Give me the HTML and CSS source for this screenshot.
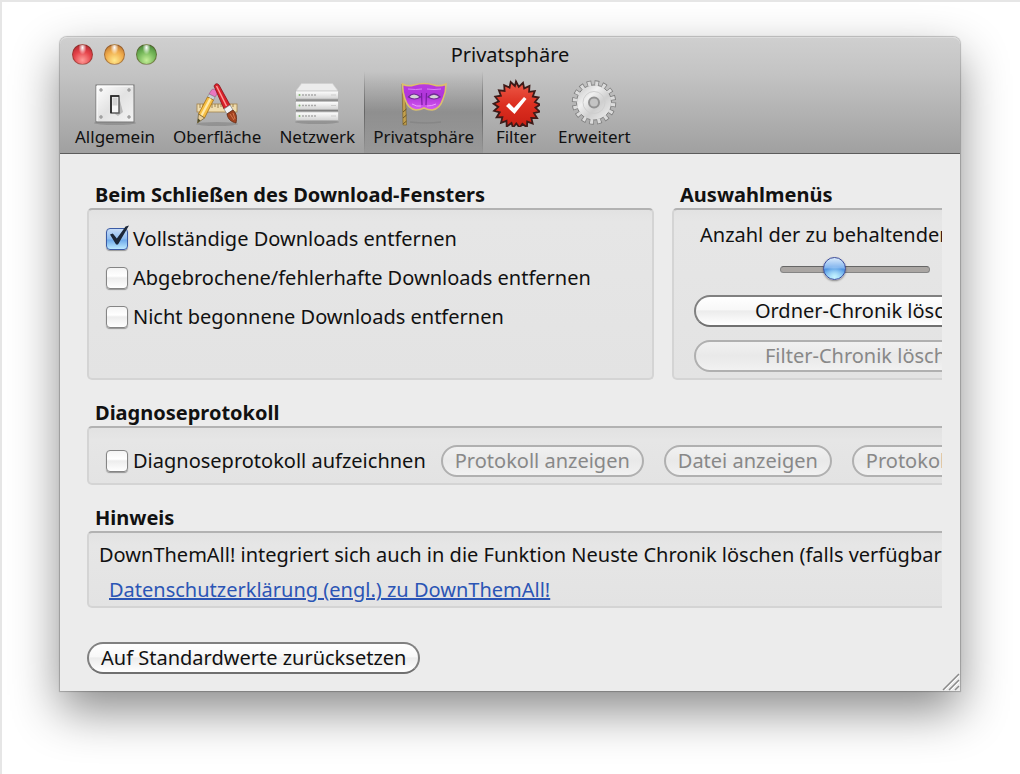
FILE: index.html
```html
<!DOCTYPE html>
<html lang="de">
<head>
  <meta charset="UTF-8" />
  <title>Privatsphäre</title>
  <link rel="stylesheet" href="styles.css">
</head>
<body>

<div class="window">
  <header class="window-head">
    <div class="titlebar">
      <div class="lights">
        <button class="light red" aria-label="Schließen"></button>
        <button class="light yellow" aria-label="Minimieren"></button>
        <button class="light green" aria-label="Zoomen"></button>
      </div>
      <h1>Privatsphäre</h1>
    </div>

    <nav class="toolbar">
      <button class="tool">
        <svg viewBox="0 0 48 48">
          <defs>
            <linearGradient id="plate" x1="0" y1="0" x2="1" y2="1">
              <stop offset="0" stop-color="#fff"/><stop offset=".5" stop-color="#e2e2e2"/><stop offset="1" stop-color="#f4f4f4"/>
            </linearGradient>
          </defs>
          <ellipse cx="24" cy="44" rx="21" ry="2" fill="#000" opacity=".15"/>
          <rect x="5" y="6" width="38" height="37" fill="url(#plate)" stroke="#777"/>
          <path d="M6 42V7h36" fill="none" stroke="#fff"/>
          <g fill="#aaa" stroke="#888" stroke-width=".5">
            <circle cx="10" cy="11" r="1.400"/><circle cx="38" cy="11" r="1.400"/>
            <circle cx="10" cy="38" r="1.400"/><circle cx="38" cy="38" r="1.400"/>
          </g>
          <path d="M28 18l4 15-5 4-3-2z" fill="#000" opacity=".2"/>
          <rect x="20" y="17" width="8" height="17" fill="#f6f6f6" stroke="#555" stroke-width="1.400"/>
          <path d="M20 34V17h8" fill="none" stroke="#222" stroke-width="1.600"/>
          <rect x="21.500" y="18.500" width="5" height="8" fill="#d4d4d4"/>
        </svg>
        <span>Allgemein</span>
      </button>

      <button class="tool">
        <svg viewBox="0 0 48 48">
          <ellipse cx="24" cy="45" rx="21" ry="2" fill="#000" opacity=".15"/>
          <rect x="4" y="25" width="40" height="8" fill="#efdcae" stroke="#a5844c" stroke-width=".8"/>
          <path d="M7 25v4M10 25v3M13 25v4M16 25v3M19 25v4M22 25v3M25 25v4M28 25v3M31 25v4M34 25v3M37 25v4M40 25v3" stroke="#8c6c3b" stroke-width=".8"/>
          <path d="M18 12q1-3 5-1 3 2 1 4l-2 3-6-3z" fill="#e878c0" stroke="#a74d85" stroke-width=".6"/>
          <path d="M16 15l6 3-1.500 3-6-3z" fill="#c9d1da" stroke="#777" stroke-width=".5"/>
          <path d="M14.500 18l6 3-9 18-6-4z" fill="#f6bf45" stroke="#a56f15" stroke-width=".8"/>
          <path d="M16.500 19l2 1-9 17-2-1z" fill="#ffe9a8"/>
          <path d="M5.500 35l6 4-7 5z" fill="#e9cf9d" stroke="#6d5b31" stroke-width=".7"/>
          <path d="M5 39.500l2.500 2-3 2.500z" fill="#4c4a2a"/>
          <path d="M21 7q2-4 5-1l11 20-6 4z" fill="#d9202a" stroke="#85141b" stroke-width=".8"/>
          <path d="M23.500 7l10 20" stroke="#ff9796" stroke-width="1.500" fill="none"/>
          <path d="M31 30l6-4 3 5-6 4z" fill="#f1f3f5" stroke="#7e8288" stroke-width=".7"/>
          <path d="M34 35l6-4c4 4 4 8 3 13-4-1-8-3-9-9z" fill="#a3431f" stroke="#622812" stroke-width=".8"/>
          <path d="M37 35l4 6M40 34l2 6" stroke="#e08559" stroke-width=".8"/>
        </svg>
        <span>Oberfläche</span>
      </button>

      <button class="tool">
        <svg viewBox="0 0 48 48">
          <defs>
            <linearGradient id="rack" x1="0" y1="0" x2="0" y2="1">
              <stop offset="0" stop-color="#fff"/><stop offset="1" stop-color="#d2d2d2"/>
            </linearGradient>
          </defs>
          <ellipse cx="24" cy="43" rx="22" ry="2" fill="#000" opacity=".15"/>
          <path d="M8.500 4.500h31l6 8h-43z" fill="#ececec" stroke="#d0d0d0" stroke-width=".7"/>
          <g fill="url(#rack)" stroke="#aaa" stroke-width=".6">
            <rect x="2.500" y="12" width="43" height="8"/>
            <rect x="2.500" y="22.500" width="43" height="8"/>
            <rect x="2.500" y="33" width="43" height="8.500"/>
          </g>
          <path d="M3 21.200h42M3 31.700h42" stroke="#808080" stroke-width="1.200"/>
          <g fill="#80b86c"><circle cx="6.500" cy="16" r="1"/><circle cx="6.500" cy="26.500" r="1"/><circle cx="6.500" cy="37" r="1"/></g>
          <path d="M9 16h15M9 26.500h15M9 37h15" stroke="#aaa" stroke-width="1.600" stroke-dasharray="2 1"/>
          <path d="M38 16h5M38 26.500h5M38 37h5" stroke="#ccc"/>
        </svg>
        <span>Netzwerk</span>
      </button>

      <button class="tool selected">
        <svg viewBox="0 0 48 48">
          <defs>
            <linearGradient id="mask" x1="0" y1="0" x2="0" y2="1">
              <stop offset="0" stop-color="#b93be0"/><stop offset=".5" stop-color="#b035da"/><stop offset="1" stop-color="#d75cf2"/>
            </linearGradient>
          </defs>
          <path d="M10 43q16 2 31 0" stroke="#666" stroke-width="1.500" opacity=".25" fill="none"/>
          <path d="M2 5l3 1 1.500 40H3z" fill="#c4a04c" stroke="#7b6530" stroke-width=".7"/>
          <path d="M3 33l3.500-3M3 39l3.500-3M3 45l3.500-3" stroke="#6c5625"/>
          <path d="M2.500 5Q8 8 14 6q10-3 20 0 6 2 12-1 0 8-3 15-3 10-11 11-4 0-8-2-4 2-8 2-8-1-11-11Q2.500 13 2.500 5z" fill="url(#mask)" stroke="#dcc06c" stroke-width="1.600"/>
          <path d="M8 10q8 1 14 0M27 10q7 1 14 0" stroke="#d785f0" fill="none"/>
          <path d="M21.500 14l.5 12M26.500 14l-.5 12" stroke="#7a1ba3" stroke-width="1.200" fill="none"/>
          <path d="M8.500 18q5-6 12 0-6 4-12 0zM28 18q6-6 12 0-6 4-12 0z" fill="#d4d2d6" stroke="#6f2a92" stroke-width="1.200"/>
          <path d="M12 25q5 3 9 2M27 27q5 0 9-2" stroke="#eda0fc" fill="none"/>
        </svg>
        <span>Privatsphäre</span>
      </button>

      <button class="tool">
        <svg viewBox="0 0 48 48">
          <defs>
            <linearGradient id="seal" x1="0" y1="0" x2="0" y2="1">
              <stop offset="0" stop-color="#ee5b49"/><stop offset=".5" stop-color="#dc2f20"/><stop offset="1" stop-color="#c91e14"/>
            </linearGradient>
          </defs>
          <path fill="url(#seal)" stroke="#3d1a18" stroke-width="1.800" d="M24 2.500l2.800 5.300 4.200-4 1.200 5.600 5.300-2.400-.4 5.800 5.700-.7-2 5.400 5.700 1-3.600 4.600 5.200 2.400-4.700 3.200 4.200 3.900-5.600 1.500 3.100 5-5.800-.1 1.400 5.600-5.500-2-.2 5.800-4.600-3.600-2.800 4-3.300-4.400-3.300 4.400-1.500-4.800-4.800 3.600-.2-5.800-5.500 2 1.400-5.600-5.800.1 3.100-5-5.600-1.500 4.200-3.900-4.700-3.200 5.200-2.400-3.600-4.600 5.700-1-2-5.400 5.700.7-.4-5.800 5.300 2.400 1.200-5.600 4.200 4z"/>
          <path d="M14 27l3-3 5 5 10-11 2.500 2-12 15z" fill="#fff"/>
        </svg>
        <span>Filter</span>
      </button>

      <button class="tool">
        <svg viewBox="0 0 48 48">
          <defs>
            <linearGradient id="gear" x1="0" y1="0" x2="1" y2="1">
              <stop offset="0" stop-color="#c4c4c4"/><stop offset=".35" stop-color="#f0f0f0"/><stop offset=".6" stop-color="#cfcfcf"/><stop offset="1" stop-color="#f2f2f2"/>
            </linearGradient>
          </defs>
          <circle cx="24" cy="23.500" r="20" fill="none" stroke="#808080" stroke-width="4.400" stroke-dasharray="4.600 3.254"/>
          <circle cx="24" cy="23.500" r="17.500" fill="url(#gear)" stroke="#808080"/>
          <circle cx="24" cy="23.500" r="19" fill="none" stroke="#dcdcdc" stroke-width="4.600" stroke-dasharray="3 4.461" stroke-dashoffset="-.68"/>
          <circle cx="24" cy="23.500" r="11" fill="none" stroke="#cfcfcf"/>
          <circle cx="24" cy="23.500" r="5" fill="#c4c4c4" stroke="#929292" stroke-width="2"/>
        </svg>
        <span>Erweitert</span>
      </button>
    </nav>
  </header>

  <main class="pane">
    <div class="columns">
      <section class="group closing">
        <h2>Beim Schließen des Download-Fensters</h2>
        <div class="box checks">
          <label><input type="checkbox" checked>Vollständige Downloads entfernen</label>
          <label><input type="checkbox">Abgebrochene/fehlerhafte Downloads entfernen</label>
          <label><input type="checkbox">Nicht begonnene Downloads entfernen</label>
        </div>
      </section>

      <section class="group menus">
        <h2>Auswahlmenüs</h2>
        <div class="box history">
          <label for="history">Anzahl der zu behaltenden Einträge:</label>
          <input id="history" type="range" min="0" max="30" value="10">
          <button class="pill">Ordner-Chronik löschen</button>
          <button class="pill" disabled>Filter-Chronik löschen</button>
        </div>
      </section>
    </div>

    <section class="group">
      <h2>Diagnoseprotokoll</h2>
      <div class="box log">
        <label><input type="checkbox">Diagnoseprotokoll aufzeichnen</label>
        <button class="pill" disabled>Protokoll anzeigen</button>
        <button class="pill" disabled>Datei anzeigen</button>
        <button class="pill" disabled>Protokoll löschen</button>
      </div>
    </section>

    <section class="group">
      <h2>Hinweis</h2>
      <div class="box notice">
        <p>DownThemAll! integriert sich auch in die Funktion Neuste Chronik löschen (falls verfügbar).</p>
        <a href="#">Datenschutzerklärung (engl.) zu DownThemAll!</a>
      </div>
    </section>

    <button class="pill reset">Auf Standardwerte zurücksetzen</button>
  </main>

  <svg class="grip" viewBox="0 0 18 18">
    <path d="M1 17L17 1M7 17L17 7M13 17l4-4" stroke="#8a8a8a" stroke-width="1.500"/>
    <path d="M3 17L17 3M9 17l8-8" stroke="#fff"/>
  </svg>
</div>

</body>
</html>
```

FILE: styles.css
```css
* {
  box-sizing: border-box;
}

body {
  margin: 0;
  min-height: 100vh;
  padding: 35px 60px 80px 58px;
  background: #fff;
  border-top: 2px solid #e6e6e6;
  border-left: 2px solid #e6e6e6;
  font-family: "Noto Sans", "Open Sans", sans-serif;
  font-size: 20px;
  line-height: 24px;
  color: #111;
}

button, input {
  font: inherit;
  color: inherit;
  margin: 0;
}

h1, h2, p {
  margin: 0;
}

.window {
  position: relative;
  background: #ececec;
  border-radius: 7px 7px 0 0;
  box-shadow: 0 0 1px 1px rgba(0, 0, 0, 0.22), 0 20px 48px rgba(0, 0, 0, 0.46);
}

.window-head {
  height: 117px;
  background: linear-gradient(#cfcfcf, #c4c4c4 30%, #a0a0a0);
  border-top: 1px solid #dcdcdc;
  border-bottom: 1px solid #5c5c5c;
  border-radius: 7px 7px 0 0;
}

.titlebar {
  display: grid;
  grid-template-columns: 1fr auto 1fr;
  align-items: center;
  height: 33px;
  padding: 0 12px;
}

.titlebar h1 {
  font-size: 20px;
  font-weight: normal;
}

.lights {
  display: flex;
  gap: 11px;
}

.light {
  width: 21px;
  height: 21px;
  padding: 0;
  border: 1px solid rgba(90, 50, 30, 0.45);
  border-radius: 50%;
}

.red {
  background: radial-gradient(ellipse at 50% 14%, #fff, transparent 30%), radial-gradient(circle at 50% 80%, #ff9c98, #e5434a 50%, #a3202a);
}

.yellow {
  background: radial-gradient(ellipse at 50% 14%, #fff, transparent 30%), radial-gradient(circle at 50% 80%, #ffe88c, #f0ac4c 50%, #b0682a);
}

.green {
  background: radial-gradient(ellipse at 50% 14%, #fff, transparent 30%), radial-gradient(circle at 50% 80%, #c4ee98, #74b658 50%, #3a7a30);
}

.toolbar {
  display: flex;
  height: 82px;
  padding: 0 6px;
}

.tool {
  display: flex;
  flex-direction: column;
  align-items: center;
  padding: 8px 9px 0;
  border: 0;
  background: none;
  font-size: 17px;
  line-height: 20px;
}

.tool svg {
  width: 48px;
  height: 48px;
}

.tool.selected {
  background:
    linear-gradient(transparent, #666 50%, transparent) left / 1px 100% no-repeat,
    linear-gradient(transparent, #666 50%, transparent) right / 1px 100% no-repeat,
    linear-gradient(transparent, rgba(0, 0, 0, 0.2) 50%, rgba(0, 0, 0, 0.05));
}

.pane {
  display: flex;
  flex-direction: column;
  align-items: flex-start;
  gap: 20px;
  margin-right: 18px;
  padding: 28px 0 17px 27px;
  overflow: hidden;
}

.columns {
  display: flex;
  gap: 18px;
}

.group {
  display: flex;
  flex-direction: column;
  flex-shrink: 0;
  min-width: 974px;
}

.closing {
  min-width: 567px;
}

.menus {
  min-width: 389px;
}

.group h2 {
  padding-left: 8px;
  font-size: 20px;
  line-height: 26px;
}

.box {
  flex-grow: 1;
  background: linear-gradient(#e2e2e2, #e6e6e6 12px, #e3e3e3);
  border: 2px solid #d4d4d4;
  border-top-color: #b2b2b2;
  border-radius: 5px;
}

.box label {
  white-space: nowrap;
}

.checks {
  display: flex;
  flex-direction: column;
  gap: 15px;
  padding: 17px;
}

.checks label, .log label {
  display: flex;
  align-items: center;
  gap: 5px;
}

input[type="checkbox"] {
  appearance: none;
  position: relative;
  width: 22px;
  height: 22px;
  border: 1px solid #858585;
  border-radius: 4px;
  background: linear-gradient(#f4f4f4, #fff 40%, #ededed 50%, #fff);
  box-shadow: 0 1px 1px rgba(0, 0, 0, 0.35);
}

input[type="checkbox"]:checked {
  border-color: #3b5ba5;
  background: linear-gradient(#c6dcf7, #8dbcf0 50%, #6eaaea 55%, #bdeaff);
}

input[type="checkbox"]:checked::after {
  content: "";
  position: absolute;
  top: -4px;
  left: 3px;
  width: 19px;
  height: 20px;
  background: #1c2738;
  clip-path: polygon(0 48%, 15% 42%, 36% 68%, 82% 8%, 100% 2%, 42% 98%, 32% 98%);
}

.history {
  display: flex;
  flex-direction: column;
  padding: 13px 20px 6px;
}

.history label {
  padding-left: 6px;
}

.history .pill + .pill {
  margin-top: 13px;
}

input[type="range"] {
  appearance: none;
  width: 150px;
  height: 24px;
  margin: 10px 0 14px 86px;
  background: none;
}

input[type="range"]::-webkit-slider-runnable-track {
  height: 7px;
  border: 1px solid #858585;
  border-top-color: #666;
  border-radius: 4px;
  background: #aaa6a3;
}

input[type="range"]::-webkit-slider-thumb {
  appearance: none;
  width: 23px;
  height: 23px;
  margin-top: -10px;
  border: 1px solid #3a4a9a;
  border-radius: 50%;
  background: radial-gradient(circle at 50% 90%, #c5f3ff, transparent 50%), linear-gradient(#d9eafb, #7fb3ee 48%, #4e93e2 52%, #8fd0fa);
  box-shadow: 0 1px 2px rgba(0, 0, 0, 0.4);
}

.pill {
  height: 32px;
  padding: 0 12px;
  border: 2px solid #808080;
  border-bottom-color: #707070;
  border-radius: 16px;
  background: linear-gradient(#fff, #f8f8f8 45%, #ececec 50%, #fff);
  line-height: 24px;
  white-space: nowrap;
}

.pill:disabled {
  border-color: #b0b0b0;
  background: linear-gradient(#f1f1f1, #e9e9e9 50%, #f1f1f1);
  color: #888;
}

.log {
  display: flex;
  align-items: center;
  gap: 20px;
  padding: 17px 17px 6px;
}

.log label {
  margin-right: -5px;
}

.notice {
  padding: 10px 10px 4px;
}

.notice p {
  white-space: nowrap;
}

.notice a {
  display: block;
  width: fit-content;
  margin: 11px 0 0 10px;
  color: #2b55b5;
}

.reset {
  margin-top: 14px;
}

.grip {
  position: absolute;
  right: 0;
  bottom: 0;
  width: 18px;
  height: 18px;
}
```
